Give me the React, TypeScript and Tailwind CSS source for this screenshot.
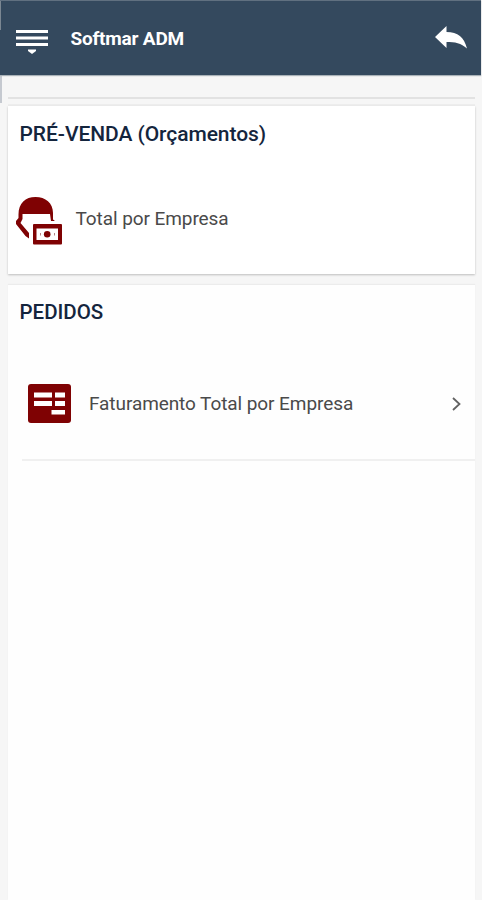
import React from "react";

function MenuIcon() {
  return (
    <svg width="32" height="24" viewBox="0 0 32 24" fill="#fff" aria-hidden="true">
      <rect y="0" width="32" height="3" />
      <rect y="6.5" width="32" height="3" />
      <rect y="13" width="32" height="3" />
      <path d="M12 19.500h8v1.500l-4 3-4-3z" />
    </svg>
  );
}

function ReplyIcon() {
  return (
    <svg width="32" height="23" viewBox="0 0 32 23" fill="#fff" aria-hidden="true">
      <path d="M0 11 11.500 0v6C23 6 29 11 32 22.500 26 17 20 16 11.500 16v6z" />
    </svg>
  );
}

function CashierIcon() {
  return (
    <svg width="46" height="48" viewBox="0 0 46 48" aria-hidden="true">
      <path
        d="M2.500 17.500C2.500 6 9.500 0 19.500 0S37 6 37 16v6.500l1.500 1V24H35l-1-7H6.500v5L4.500 26l8.500 10v5.500L9.500 39 0 27v-3l2.500-3z"
        fill="#7f0203"
      />
      <rect x="17" y="27" width="29" height="20.500" rx="1" fill="#7f0203" />
      <rect x="20.500" y="31.500" width="21.500" height="11.500" fill="#fff" />
      <circle cx="31.200" cy="37.300" r="3.300" fill="#7f0203" />
      <path d="M24.500 36v2.500M38.500 36v2.500" stroke="#b58585" />
    </svg>
  );
}

function BillingIcon() {
  return (
    <svg width="43" height="39" viewBox="0 0 43 39" aria-hidden="true">
      <rect width="43" height="39" rx="3" fill="#7f0203" />
      <g fill="#fff">
        <rect x="6" y="8.500" width="18" height="5" />
        <rect x="27" y="8.500" width="10" height="5" />
        <rect x="6" y="17" width="18" height="5" />
        <rect x="27" y="17" width="10" height="5" />
        <rect x="23.500" y="26" width="13.500" height="4.500" />
      </g>
    </svg>
  );
}

export default function App() {
  return (
    <div className="flex h-[900px] w-[482px] flex-col overflow-hidden bg-[#f6f6f6] font-['Roboto',sans-serif]">
      <header className="relative mr-px flex h-[75px] shrink-0 items-start border-t border-[#607080] bg-[#34495e] pr-[14px] pl-4 shadow-[0_1px_1px_#a9b2b8]">
        <div className="absolute top-0 left-0 h-[29px] w-px bg-[#7b8792]" />
        <div className="mt-[29px] w-[54.5px]">
          <MenuIcon />
        </div>
        <h1 className="mt-[26px] text-[19px] leading-6 font-bold tracking-[-0.2px] text-white">Softmar ADM</h1>
        <div className="mt-[25px] ml-auto">
          <ReplyIcon />
        </div>
      </header>
      <div className="flex grow">
        <div className="h-[28px] w-[2px] bg-[#c5c9d0]" />
        <main className="mr-[7px] ml-[6px] flex grow flex-col">
          <div className="h-[24px] border-b-2 border-[#e2e2e2]" />
          <div className="h-[7px] border-b-2 border-[#ededed]" />
          <section className="h-[168px] bg-white shadow-[0_1px_2px_#bdbdbd]">
            <h2 className="pt-4 pl-[11.5px] text-[21px] leading-6 font-medium tracking-[-0.06px] text-[#14253d]">PRÉ-VENDA (Orçamentos)</h2>
            <div className="mt-[51px] flex items-start pl-2">
              <CashierIcon />
              <span className="mt-[10px] ml-[13.5px] text-[19px] leading-6 tracking-[-0.08px] text-[#4a4a4a]">Total por Empresa</span>
            </div>
          </section>
          <section className="mt-[11px] grow bg-[#fefefe] shadow-[0_-1px_1px_#ececec]">
            <h2 className="pt-[15px] pl-[11.5px] text-[20.5px] leading-6 font-medium text-[#14253d]">PEDIDOS</h2>
            <div className="mt-[60px] ml-[14px] flex h-[77px] items-start border-b-2 border-[#f0f0f0] pl-[6px]">
              <BillingIcon />
              <span className="mt-[8px] ml-[18px] text-[19px] leading-6 tracking-[-0.08px] text-[#4a4a4a]">Faturamento Total por Empresa</span>
              <svg className="mt-[13px] mr-[14px] ml-auto" width="9" height="14" viewBox="0 0 9 14" fill="none" stroke="#626262" strokeWidth="1.800" aria-hidden="true">
                <path d="m1 1 6.500 6L1 13" />
              </svg>
            </div>
          </section>
        </main>
      </div>
    </div>
  );
}
